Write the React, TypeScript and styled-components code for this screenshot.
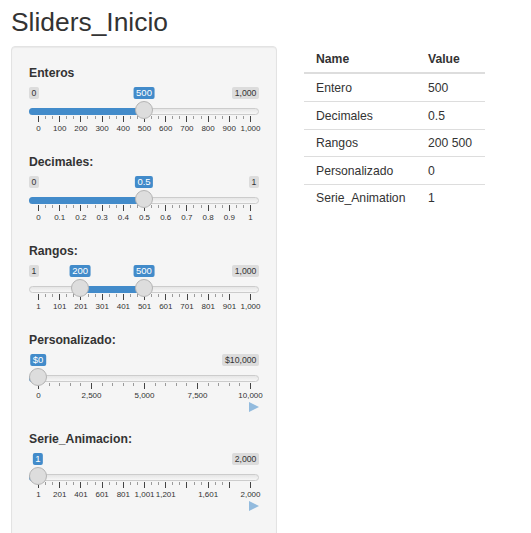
import React from "react";
import styled, { createGlobalStyle } from "styled-components";

const GlobalStyle = createGlobalStyle`
  html { overflow: hidden; }
  body {
    margin: 0;
    background: #ffffff;
    font-family: "Liberation Sans", Arial, Helvetica, sans-serif;
    color: #333333;
  }
`;

const Page = styled.div`
  padding: 8px 0 0 11px;
`;

const Title = styled.h2`
  margin: 0;
  font-size: 26.4px;
  font-weight: 400;
  line-height: 28.6px;
  color: #333333;
`;

const Layout = styled.div`
  display: flex;
  align-items: flex-start;
  gap: 27px;
  margin-top: 9.4px;
`;

const Well = styled.div`
  width: 266px;
  box-sizing: border-box;
  padding: 18px 17px 19px;
  background: #f5f5f5;
  border: 1px solid #e3e3e3;
  border-radius: 4px;
  box-shadow: inset 0 1px 1px rgba(0, 0, 0, 0.05);
`;

const FieldGroup = styled.div`
  display: flex;
  flex-direction: column;
  margin-bottom: 19.5px;
`;

const FieldLabel = styled.div`
  font-size: 12.2px;
  font-weight: 700;
  line-height: 16px;
  margin-bottom: 6.5px;
  color: #333333;
`;

const SliderBox = styled.div`
  display: flex;
  flex-direction: column;
  width: 230px;
`;

const TagRow = styled.div`
  position: relative;
  display: flex;
  justify-content: space-between;
  align-items: flex-start;
  height: 12px;
`;

const Tag = styled.span`
  font-size: 9.5px;
  line-height: 10px;
  padding: 1px 2.5px;
  border-radius: 2px;
  white-space: nowrap;
`;

const ValueTag = styled(Tag)`
  position: absolute;
  top: 0;
  background: #428bca;
  color: #ffffff;
  transform: translateX(-50%);
  z-index: 3;
`;

const EdgeTag = styled(Tag)<{ $visible: boolean }>`
  font-size: 8.7px;
  padding: 1px 2.6px;
  background: rgba(0, 0, 0, 0.1);
  color: #333333;
  visibility: ${(p) => (p.$visible ? "visible" : "hidden")};
`;

const TrackRow = styled.div`
  position: relative;
  margin: 9px 0 1px;
  height: 7px;
`;

const Line = styled.div`
  height: 7px;
  box-sizing: border-box;
  border: 1px solid #cccccc;
  border-radius: 8px;
  background: linear-gradient(to bottom, #dddddd -50%, #ffffff 150%);
`;

const Bar = styled.div<{ $single: boolean }>`
  position: absolute;
  top: 0;
  height: 7px;
  background: #428bca;
  border-radius: ${(p) => (p.$single ? "8px 0 0 8px" : "0")};
`;

const Handle = styled.div`
  position: absolute;
  top: -7px;
  width: 18px;
  height: 18px;
  box-sizing: border-box;
  margin-left: -9px;
  border-radius: 50%;
  border: 1px solid #b4b4b4;
  background: #dddddd;
  z-index: 2;
`;

const GridRow = styled.div`
  position: relative;
  height: 18px;
  margin: 0 9px;
`;

const Pol = styled.span<{ $small?: boolean }>`
  position: absolute;
  top: 0;
  width: 1px;
  height: ${(p) => (p.$small ? "3px" : "6px")};
  background: ${(p) => (p.$small ? "#9a9a9a" : "#444444")};
`;

const GridText = styled.span`
  position: absolute;
  top: 8px;
  font-size: 8px;
  line-height: 10px;
  color: #333333;
  white-space: nowrap;
  transform: translateX(-50%);
`;

const PlayRow = styled.div`
  display: flex;
  justify-content: flex-end;
  height: 10px;
  width: 230px;
`;

const PlayIcon = styled.svg`
  display: block;
  margin-top: 1px;
  overflow: visible;
`;

const Main = styled.div`
  flex: 0 0 auto;
`;

const TableGrid = styled.div`
  display: grid;
  grid-template-columns: 112px 69px;
  font-size: 12.2px;
  color: #333333;
`;

const HeadCell = styled.div`
  display: flex;
  align-items: center;
  height: 26px;
  padding-left: 12px;
  font-weight: 700;
  border-bottom: 2px solid #dddddd;
`;

const BodyCell = styled.div<{ $first: boolean }>`
  display: flex;
  align-items: center;
  box-sizing: border-box;
  height: 27.5px;
  padding-left: 12px;
  border-top: ${(p) => (p.$first ? "0" : "1px solid #dddddd")};
  white-space: nowrap;
`;

type GridData = {
  big: { p: number; text: string; hidden: boolean }[];
  small: number[];
};

function buildGrid(total: number, labels: string[], hidden: number[] = []): GridData {
  let smallMax = 4;
  if (total > 4) smallMax = 3;
  if (total > 7) smallMax = 2;
  if (total > 14) smallMax = 1;
  if (total > 28) smallMax = 0;
  const bigW = 100 / total;
  const big: GridData["big"] = [];
  const small: number[] = [];
  for (let i = 0; i < total + 1; i++) {
    let lsm = smallMax;
    let bigP = bigW * i;
    if (bigP > 100) {
      bigP = 100;
      lsm -= 2;
      if (lsm < 0) lsm = 0;
    }
    const smallP = (bigP - bigW * (i - 1)) / (lsm + 1);
    for (let z = 1; z <= lsm; z++) {
      if (bigP === 0) break;
      small.push(bigP - smallP * z);
    }
    big.push({ p: bigP, text: labels[i] ?? "", hidden: hidden.includes(i) });
  }
  return { big, small };
}

type SliderSpec = {
  label: string;
  values: number[];
  valueTexts: string[];
  minText: string;
  maxText: string;
  showMin: boolean;
  showMax: boolean;
  grid: GridData;
  play?: boolean;
};

const TRACK = 212;
const OFFSET = 9;

function Slider({ spec }: { spec: SliderSpec }) {
  const centers = spec.values.map((v) => OFFSET + v * TRACK);
  const single = centers.length === 1;
  const barLeft = single ? 0 : centers[0];
  const barWidth = single ? centers[0] : centers[1] - centers[0];
  return (
    <FieldGroup>
      <FieldLabel>{spec.label}</FieldLabel>
      <SliderBox>
        <TagRow>
          <EdgeTag $visible={spec.showMin}>{spec.minText}</EdgeTag>
          <EdgeTag $visible={spec.showMax}>{spec.maxText}</EdgeTag>
          {centers.map((c, i) => (
            <ValueTag key={"v" + i} style={{ left: c }}>
              {spec.valueTexts[i]}
            </ValueTag>
          ))}
        </TagRow>
        <TrackRow>
          <Line />
          <Bar $single={single} style={{ left: barLeft, width: barWidth }} />
          {centers.map((c, i) => (
            <Handle key={"h" + i} style={{ left: c }} />
          ))}
        </TrackRow>
        <GridRow>
          {spec.grid.small.map((p, i) => (
            <Pol key={"s" + i} $small style={{ left: p + "%" }} />
          ))}
          {spec.grid.big.map((b, i) => (
            <React.Fragment key={"b" + i}>
              <Pol style={{ left: b.p + "%" }} />
              <GridText
                style={{ left: `calc(${b.p}% + 0.5px)`, visibility: b.hidden ? "hidden" : "visible" }}
              >
                {b.text}
              </GridText>
            </React.Fragment>
          ))}
        </GridRow>
      </SliderBox>
      {spec.play && (
        <PlayRow>
          <PlayIcon width="10" height="10" viewBox="0 0 10 10">
            <polygon points="0,0 10,5 0,10" fill="#428bca" opacity="0.55" />
          </PlayIcon>
        </PlayRow>
      )}
    </FieldGroup>
  );
}

const tens = (start: number, step: number, fmt: (n: number) => string, last: string) =>
  Array.from({ length: 11 }, (_, i) => (i === 10 ? last : fmt(start + step * i)));

const comma = (n: number) => n.toLocaleString("en-US");

const sliders: SliderSpec[] = [
  {
    label: "Enteros",
    values: [0.5],
    valueTexts: ["500"],
    minText: "0",
    maxText: "1,000",
    showMin: true,
    showMax: true,
    grid: buildGrid(10, tens(0, 100, comma, "1,000")),
  },
  {
    label: "Decimales:",
    values: [0.5],
    valueTexts: ["0.5"],
    minText: "0",
    maxText: "1",
    showMin: true,
    showMax: true,
    grid: buildGrid(10, ["0", "0.1", "0.2", "0.3", "0.4", "0.5", "0.6", "0.7", "0.8", "0.9", "1"]),
  },
  {
    label: "Rangos:",
    values: [199 / 999, 499 / 999],
    valueTexts: ["200", "500"],
    minText: "1",
    maxText: "1,000",
    showMin: true,
    showMax: true,
    grid: buildGrid(9.99, tens(1, 100, comma, "1,000")),
  },
  {
    label: "Personalizado:",
    values: [0],
    valueTexts: ["$0"],
    minText: "$0",
    maxText: "$10,000",
    showMin: false,
    showMax: true,
    grid: buildGrid(4, ["0", "2,500", "5,000", "7,500", "10,000"]),
    play: true,
  },
  {
    label: "Serie_Animacion:",
    values: [0],
    valueTexts: ["1"],
    minText: "1",
    maxText: "2,000",
    showMin: false,
    showMax: true,
    grid: buildGrid(9.995, tens(1, 200, comma, "2,000"), [7, 9]),
    play: true,
  },
];

const rows: [string, string][] = [
  ["Entero", "500"],
  ["Decimales", "0.5"],
  ["Rangos", "200 500"],
  ["Personalizado", "0"],
  ["Serie_Animation", "1"],
];

export default function App() {
  return (
    <>
      <GlobalStyle />
      <Page>
        <Title>Sliders_Inicio</Title>
        <Layout>
          <Well>
            {sliders.map((s) => (
              <Slider key={s.label} spec={s} />
            ))}
          </Well>
          <Main>
            <TableGrid>
              <HeadCell>Name</HeadCell>
              <HeadCell>Value</HeadCell>
              {rows.map(([n, v], i) => (
                <React.Fragment key={n}>
                  <BodyCell $first={i === 0}>{n}</BodyCell>
                  <BodyCell $first={i === 0}>{v}</BodyCell>
                </React.Fragment>
              ))}
            </TableGrid>
          </Main>
        </Layout>
      </Page>
    </>
  );
}
